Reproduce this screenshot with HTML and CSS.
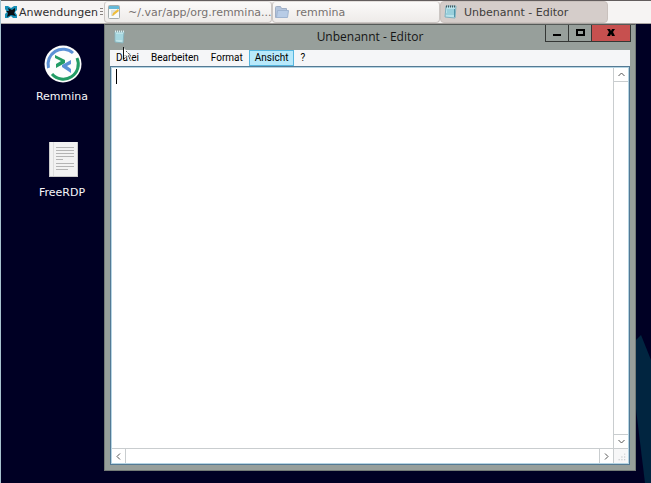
FILE: index.html
```html
<!DOCTYPE html>
<html lang="de">
<head>
<meta charset="utf-8">
<title>Unbenannt - Editor</title>
<link rel="stylesheet" href="styles.css">
</head>
<body>
<nav class="panel">
  <button class="launcher" type="button">
    <svg width="14" height="14" viewBox="0 0 14 14"><path d="M1 1l3 0 3 2 3-2h3v4l-2 2 2 3v3h-4l-2-2-3 2H1V9l2-2-2-3z" fill="#178fb5"/><path d="M4 3l4 2 3-2v3l-1 2 2 3-5-1-4 2 1-4-2-2 3 0z" fill="#090d12"/></svg>
    Anwendungen
  </button>
  <span class="grip"></span>
  <button class="task" type="button">
    <svg width="16" height="16" viewBox="0 0 16 16"><rect x="2.5" y="1.5" width="11" height="13" rx="1" fill="#f8fafa" stroke="#a5adad"/><path d="M3 2h10v3H3z" fill="#65b9d8"/><path d="M5 7h5M5 9h4M5 11h3" stroke="#bec6c7"/><path d="M6 12l1-3 5-4 1 2-5 4z" fill="#efbd39"/></svg>
    <span>~/.var/app/org.remmina...</span>
  </button>
  <button class="task" type="button">
    <svg width="16" height="16" viewBox="0 0 16 16"><path d="M1.500 3.500q0-1 1-1h4l1 2h5v9h-11z" fill="#b4c5dd" stroke="#a0afc5"/><path d="M3.500 6.500h11l-1 7h-11z" fill="#b8cce6" stroke="#9fb4d0"/></svg>
    <span>remmina</span>
  </button>
  <button class="task task-active" type="button">
    <svg width="16" height="16" viewBox="0 0 16 16"><path d="M4 2h10l-1 12-10-1z" fill="#b8e3eb" stroke="#7fb0bf"/><path d="M5 6h7M5 8h7M4 10h8" stroke="#7bbccd"/><path d="M4 2.500h10" stroke="#46575b" stroke-width="2" stroke-dasharray="1 1"/><path d="M12 5h1v8h-1z" fill="#4f94a9"/></svg>
    <span>Unbenannt - Editor</span>
  </button>
</nav>
<main class="desktop">
  <svg class="wallpaper" width="16" height="148" viewBox="0 0 16 148"><path d="M0 6L6 0L16 25V148H10L0 66z" fill="#012540"/></svg>
  <div class="shortcuts">
    <a class="shortcut" href="#remmina">
      <svg width="40" height="40" viewBox="0 0 40 40"><circle cx="21" cy="20" r="18.500" fill="#fcfdfc"/><g fill="none" stroke-width="3"><path d="M6.500 24A15 15 0 0 1 31 9" stroke="#5a91d6"/><path d="M35 14A15 15 0 0 1 10 30" stroke="#229c65"/></g><path d="M13 11l10 5v3l-9 5v-4l5-3-6-3z" fill="#229c65"/><path d="M29 16l-9 5v2l9 6v-4l-4-3 4-2z" fill="#5a91d6"/></svg>
      <span>Remmina</span>
    </a>
    <a class="shortcut" href="#freerdp">
      <svg width="40" height="40" viewBox="0 0 40 40"><path d="M7 2h29v35H7z" fill="#f2f2f2"/><path d="M7.500 2v34M7 36.500h29M35.500 2v34" stroke="#cacaca"/><path d="M11.500 2v34" stroke="#dedede"/><path d="M14 7.500h18M14 10.500h18M14 13.500h18M14 16.500h18M14 19.500h7M14 23.500h18M14 26.500h18M14 29.500h12" stroke="#b4b4b4"/></svg>
      <span>FreeRDP</span>
    </a>
  </div>
  <section class="window">
    <header class="titlebar">
      <svg class="app-icon" width="16" height="16" viewBox="0 0 16 16"><path d="M3 3h9l-1 11-8-1z" fill="#bde3e8" stroke="#86b3bd"/><path d="M4 6h7M4 8h7M4 10h7" stroke="#8ecbd8"/><path d="M3 2.500h10" stroke="#d9eef0" stroke-width="2" stroke-dasharray="1 1"/></svg>
      <h1>Unbenannt - Editor</h1>
      <div class="controls">
        <button type="button" aria-label="Minimieren"><svg width="10" height="10" viewBox="0 0 10 10"><path d="M1 6h8v2H1z"/></svg></button>
        <button type="button" aria-label="Maximieren"><svg width="10" height="10" viewBox="0 0 10 10"><path d="M1 1h9v7H1zM3 3v3h5V3z" fill-rule="evenodd"/></svg></button>
        <button class="close" type="button" aria-label="Schließen"><svg width="10" height="10" viewBox="0 0 10 10"><path d="M1 1h3l1 2 1-2h3L7 4l2 4H6L5 6 4 8H1l2-4z"/></svg></button>
      </div>
    </header>
    <div class="menubar">
      <button type="button">Datei</button>
      <button type="button">Bearbeiten</button>
      <button type="button">Format</button>
      <button class="selected" type="button">Ansicht</button>
      <button type="button">?</button>
    </div>
    <div class="editor">
      <textarea aria-label="Text"></textarea>
      <div class="scroll vertical">
        <button type="button" aria-label="Nach oben"><svg width="9" height="9" viewBox="0 0 9 9"><path d="M1.500 6l3-3 3 3"/></svg></button>
        <button type="button" aria-label="Nach unten"><svg width="9" height="9" viewBox="0 0 9 9"><path d="M1.500 3l3 3 3-3"/></svg></button>
      </div>
      <div class="scroll horizontal">
        <button type="button" aria-label="Nach links"><svg width="9" height="9" viewBox="0 0 9 9"><path d="M6 1.500l-3 3 3 3"/></svg></button>
        <button type="button" aria-label="Nach rechts"><svg width="9" height="9" viewBox="0 0 9 9"><path d="M3 1.500l3 3-3 3"/></svg></button>
      </div>
      <svg class="resize" width="15" height="15" viewBox="0 0 15 15"><path d="M11 5h1v1h-1zM8 8h1v1H8zM11 8h1v1h-1zM5 11h1v1H5zM8 11h1v1H8zM11 11h1v1h-1z" fill="#a8adb2"/></svg>
      <span class="caret"></span>
    </div>
  </section>
</main>
<svg class="pointer" width="12" height="18" viewBox="0 0 12 18"><path d="M1 1v12l3-3 2 5 2-1-2-4h4z" fill="#fff" fill-opacity=".7"/><path d="M.5 0v12" stroke="#111"/><path d="M1 12l3-3M3 4l5 5H5l3 5" fill="none" stroke="#555" stroke-dasharray="2 1"/></svg>
</body>
</html>
```
FILE: styles.css
```css
* {
  box-sizing: border-box;
}

body {
  margin: 0;
  height: 100vh;
  display: flex;
  flex-direction: column;
  overflow: hidden;
  border-left: 1px solid #a7c3cf;
  background: #000024;
  font-family: "DejaVu Sans", sans-serif;
  font-size: 11px;
}

button {
  margin: 0;
  padding: 0;
  border: 0;
  background: none;
  color: inherit;
  font: inherit;
}

svg {
  display: block;
  flex: none;
}

.panel {
  display: flex;
  align-items: stretch;
  height: 24px;
  flex: none;
  border-top: 1px solid #635d5d;
  border-bottom: 1px solid #aaa5a2;
  background: #f6f4f3;
  color: #302f2f;
}

.launcher {
  display: flex;
  align-items: center;
  gap: 1px;
  width: 98px;
  padding-left: 3px;
  flex: none;
}

.grip {
  width: 3px;
  height: 8px;
  margin: 7px 1px 0;
  flex: none;
  background: repeating-linear-gradient(#88827f 0 1px, transparent 1px 3px);
}

.task {
  display: flex;
  align-items: center;
  gap: 6px;
  flex: 0 1 168px;
  min-width: 0;
  padding-left: 1px;
  border: 1px solid #cbc6c3;
  border-top-color: #e3dfdc;
  border-radius: 4px;
  background: linear-gradient(#fbfaf9, #eeebe9);
  color: #77716f;
  white-space: nowrap;
}

.task-active {
  border-color: #c9c1bd;
  background: #d5cdca;
  color: #403d3b;
}

.desktop {
  position: relative;
  flex: 1;
}

.wallpaper {
  position: absolute;
  right: 0;
  bottom: 0;
}

.shortcuts {
  display: flex;
  flex-direction: column;
  gap: 35px;
  width: 122px;
  padding-top: 20px;
}

.shortcut {
  display: flex;
  flex-direction: column;
  align-items: center;
  gap: 5px;
  line-height: 16px;
  color: #f7f7fa;
  text-decoration: none;
}

.window {
  position: absolute;
  inset: 0 15px 12px 103px;
  display: flex;
  flex-direction: column;
  padding: 0 5px 5px;
  border: 1px solid #747b77;
  border-top-color: #555a58;
  background: #979f9b;
  color: #151515;
  font-family: "Open Sans", sans-serif;
}

.titlebar {
  display: grid;
  grid-template-columns: 1fr auto 1fr;
  height: 25px;
  flex: none;
}

.app-icon {
  margin: 4px 0 0 2px;
}

h1 {
  margin: 3px 0 0;
  font-size: 12px;
  font-weight: 400;
  line-height: 18px;
}

.controls {
  display: flex;
  justify-self: end;
  height: 17px;
  margin-right: -1px;
  border: 1px solid #343735;
  border-top: 0;
}

.controls button {
  display: flex;
  align-items: center;
  justify-content: center;
  width: 23px;
  border-right: 1px solid #343735;
}

.controls .close {
  width: 38px;
  border: 0;
  background: #c7504f;
}

.menubar {
  display: flex;
  height: 16px;
  flex: none;
  background: #f5f6f8;
  color: #000;
  font-family: Roboto, sans-serif;
  font-size: 10px;
  line-height: 14px;
}

.menubar button {
  padding: 0 5px;
  border: 1px solid transparent;
}

.menubar .selected {
  border-color: #56b6df;
  background: #b8e9fb;
}

.editor {
  position: relative;
  display: grid;
  grid-template: 1fr 15px / 1fr 15px;
  flex: 1;
  min-height: 0;
  border: 1px solid #547a94;
  outline: 1px solid #b5d4e3;
  outline-offset: -2px;
  padding: 1px;
  background: #fff;
}

textarea {
  width: 100%;
  height: 100%;
  padding: 1px 4px;
  border: 0;
  outline: 0;
  resize: none;
  background: #fff;
  font: 12px "Liberation Mono", monospace;
}

.scroll {
  display: flex;
  justify-content: space-between;
  border: 0 solid #c9cdcf;
  background: #fff;
}

.vertical {
  flex-direction: column;
  border-left-width: 1px;
}

.horizontal {
  border-top-width: 1px;
}

.scroll button {
  display: flex;
  align-items: center;
  justify-content: center;
  width: 14px;
  height: 14px;
  border: 0 solid #c9cdcf;
}

.scroll path {
  fill: none;
  stroke: #555;
}

.vertical button:first-child {
  border-bottom-width: 1px;
}

.vertical button:last-child {
  border-top-width: 1px;
}

.horizontal button:first-child {
  border-right-width: 1px;
}

.horizontal button:last-child {
  border-left-width: 1px;
}

.resize {
  border: 0 solid #c9cdcf;
  border-width: 1px 0 0 1px;
  background: #f7f7f8;
}

.caret {
  position: absolute;
  left: 5px;
  top: 2px;
  width: 1px;
  height: 15px;
  background: #000;
}

.pointer {
  position: absolute;
  left: 123px;
  top: 47px;
}
```
